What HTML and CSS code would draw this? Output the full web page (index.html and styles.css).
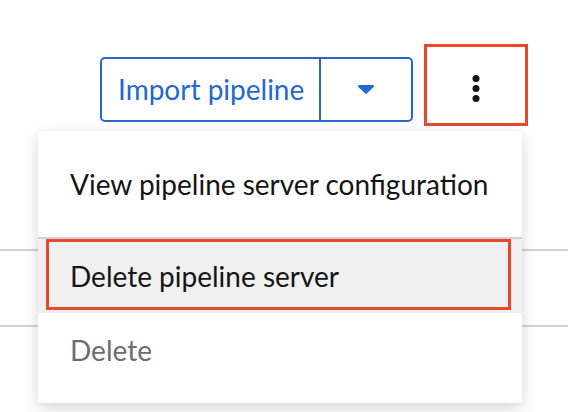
FILE: index.html
```html
<!DOCTYPE html>
<html lang="en">
<head>
<meta charset="utf-8">
<title>Pipeline server actions</title>
<link rel="stylesheet" href="styles.css">
</head>
<body>
<div class="page">
  <div class="toolbar">
    <div class="split-button">
      <button class="split-main" type="button">Import pipeline</button>
      <button class="split-toggle" type="button" aria-label="More import options">
        <svg class="caret" viewBox="0 0 16 9" width="16" height="9" aria-hidden="true"><path d="M1.2 0 H14.8 C15.8 0 16.3 1.2 15.6 1.9 L8.8 8.6 C8.4 9 7.6 9 7.2 8.6 L0.4 1.9 C-0.3 1.2 0.2 0 1.2 0 Z"/></svg>
      </button>
    </div>
    <button class="kebab" type="button" aria-label="Actions">
      <svg viewBox="0 0 8 28" width="8" height="28" aria-hidden="true"><circle cx="4" cy="3.5" r="3.5"/><circle cx="4" cy="13.5" r="3.5"/><circle cx="4" cy="23.5" r="3.5"/></svg>
    </button>
  </div>
  <div class="table">
    <div class="row row-first"></div>
    <div class="row"></div>
  </div>
  <div class="menu" role="menu">
    <div class="menu-item" role="menuitem">View pipeline server configuration</div>
    <div class="menu-divider"></div>
    <div class="menu-item is-hover" role="menuitem">Delete pipeline server<span class="highlight-box"></span></div>
    <div class="menu-item is-disabled" role="menuitem">Delete</div>
  </div>
</div>
</body>
</html>
```
FILE: styles.css
```css
* { box-sizing: border-box; }
html, body { margin: 0; padding: 0; background: #fff; }
body {
  font-family: Lato, "Noto Sans", sans-serif;
  color: #151515;
  width: 568px;
  height: 412px;
  overflow: hidden;
}
.page { position: relative; width: 568px; height: 412px; }

.toolbar {
  display: flex;
  justify-content: flex-end;
  align-items: flex-start;
  gap: 11px;
  padding: 44px 40px 0 0;
  height: 126px;
}
.split-button {
  display: flex;
  margin-top: 13px;
  height: 65px;
  border: 2px solid #2468cf;
  border-radius: 5px;
}
.split-button .split-main,
.split-button .split-toggle {
  font-family: inherit;
  background: none;
  border: 0;
  margin: 0;
  color: #2468cf;
  cursor: pointer;
}
.split-button .split-main {
  font-size: 28px;
  padding: 0 0 1px 16px;
  width: 219px;
  text-align: left;
  border-right: 2px solid #2468cf;
}
.split-button .split-toggle {
  width: 90px;
  display: flex;
  align-items: center;
  justify-content: center;
  padding: 0;
}
.caret { fill: #2468cf; display: block; }

.kebab {
  width: 104px;
  height: 82px;
  border: 3px solid #e9472a;
  background: #fff;
  display: flex;
  align-items: center;
  justify-content: center;
  padding: 0;
  margin: 0;
}
.kebab svg { fill: #151515; display: block; margin-top: 8px; }

.table { width: 100%; }
.row { height: 76px; border-bottom: 2px solid #d2d2d2; }
.row-first { height: 125px; }

.menu {
  position: absolute;
  top: 131px;
  left: 38px;
  width: 484px;
  padding: 16px 0;
  background: #fff;
  box-shadow: 0 8px 16px rgba(3, 3, 3, 0.12), 0 0 8px rgba(3, 3, 3, 0.06);
}
.menu-item {
  position: relative;
  height: 74px;
  display: flex;
  align-items: center;
  padding-left: 32px;
  font-size: 28px;
  color: #151515;
  white-space: nowrap;
}
.menu-divider {
  margin-top: 16px;
  height: 2px;
  background: #d2d2d2;
}
.is-hover { background: #f0f0f0; }
.is-disabled { color: #6a6e73; }
.highlight-box {
  position: absolute;
  left: 8px;
  right: 11px;
  top: 0;
  bottom: 3px;
  border: 3px solid #e9472a;
}
```
